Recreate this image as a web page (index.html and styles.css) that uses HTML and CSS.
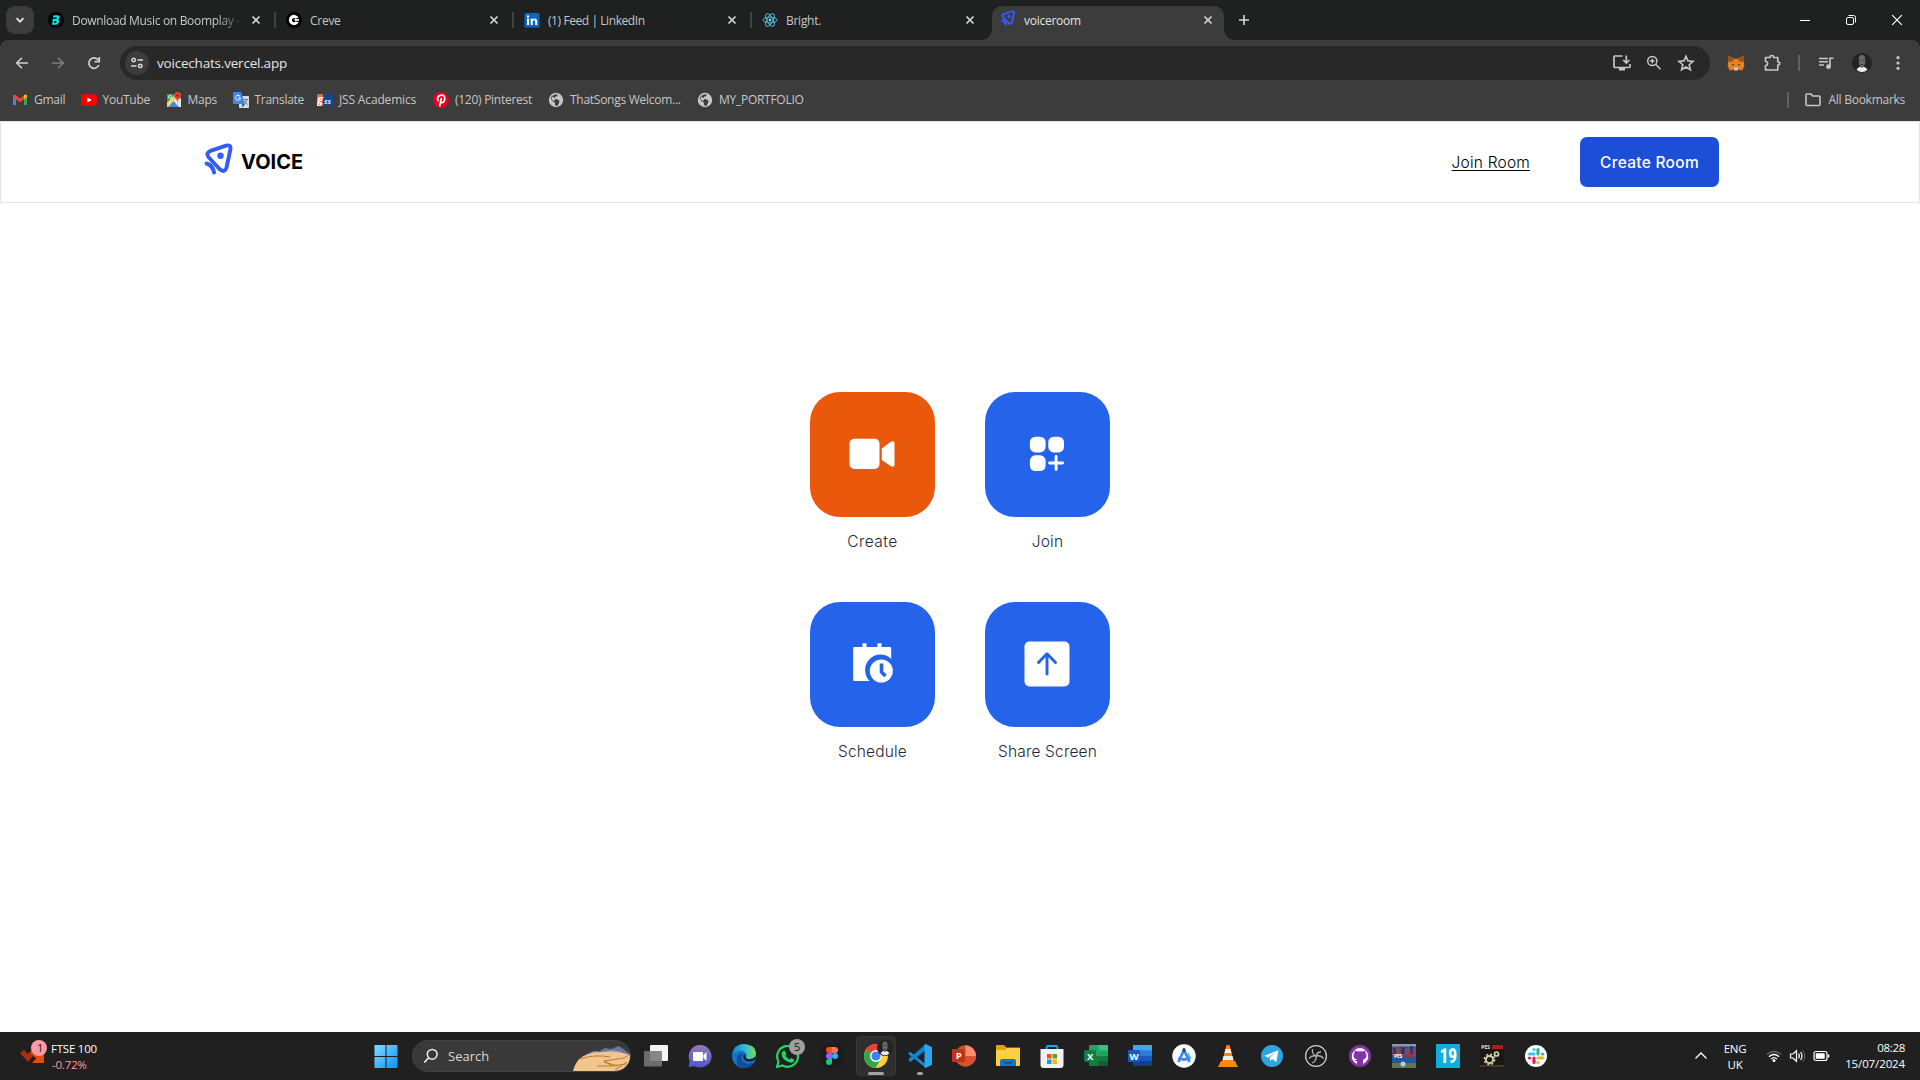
FILE: index.html
```html
<!DOCTYPE html>
<html lang="en">
<head>
<meta charset="utf-8">
<title>voiceroom</title>
<link rel="stylesheet" href="styles.css">
</head>
<body>
<svg class="defs" width="0" height="0">
  <defs>
    <symbol id="close" viewBox="0 0 16 16"><path d="M4.500 4.500l7 7M11.500 4.500l-7 7" stroke="currentColor" stroke-width="1.700" fill="none"/></symbol>
    <symbol id="globe" viewBox="0 0 16 16"><circle cx="8" cy="8" r="7.200" fill="#c4c7c9"/><path d="M3 5.200C4.600 3.200 7.500 2 9.600 2.200L9 4.600H7v2.200l2.600.6c2 .5 2 2 1.600 3.200L9.700 13.600C8.800 14.300 7.500 14 7.300 13.200L6.800 10.600 3.800 8.800z" fill="#3c3c3c"/><path d="M4 4.400l3.600 2-1.400 2.600L4 8z" fill="#c4c7c9"/></symbol>
    <symbol id="voice" viewBox="0 0 28 32"><g fill="none" stroke="#335cff" stroke-linecap="round" stroke-linejoin="round"><path d="M5.300 8.200 21.500 2.700Q26.500 1.500 26 6L22 24.500Q20 30.500 15 26L4.300 14.500Q1 10 5.300 8.200z" stroke-width="3.900"/><path d="M2 20.500Q8 22 9.600 29.500" stroke-width="4"/></g><circle cx="16" cy="12.700" r="3.200" fill="#335cff"/></symbol>
    <symbol id="face" viewBox="0 0 20 20"><circle cx="10" cy="10" r="10" fill="#242321"/><path d="M4.500 16.500q2-2.500 4-2.700l1.500 1 1.500-1q2 .2 4 2.700-2 2.500-5.500 2.500t-5.500-2.500z" fill="#eee"/><path d="M6.800 5q.5-3 3.200-3t3.200 3v5q-.7 3.500-3.200 4.500-2.500-1-3.200-4.500z" fill="#6a6a6a"/><path d="M7.500 7h1.800M10.700 7h1.800M8.700 11.500h2.600" stroke="#333" stroke-width="1.100"/></symbol>
  </defs>
</svg>

<header class="browser">
  <div class="tabstrip">
    <button class="tab-search"><svg width="12" height="12" viewBox="0 0 12 12"><path d="M2.500 4.200 6 7.700l3.500-3.500" fill="none" stroke="#e3e3e3" stroke-width="1.900"/></svg></button>
    <div class="tab">
      <svg width="16" height="16" viewBox="0 0 16 16"><circle cx="8" cy="8" r="8" fill="#000"/><path d="M5.300 3.200h4.200q2.500 0 2 2.400-.3 1.500-1.300 2 1.200.7.800 2.500-.5 2.700-3 2.700H3.800L4.900 8.500h1.600L6 10.700h1.500q.8 0 1-.8t-.8-.9H4.300l.5-2.200H8q.8 0 .9-.7t-.7-.7H5z" fill="#00e5ee"/></svg>
      <span class="tab-title fade">Download Music on Boomplay -</span><svg class="x"><use href="#close"/></svg>
    </div>
    <div class="tab">
      <svg width="16" height="16" viewBox="0 0 16 16"><circle cx="8" cy="8" r="8" fill="#000"/><path d="M12.600 5.500A5.200 5.200 0 1 0 12.700 10.300L9.700 9.200A2 2 0 1 1 9.500 6.700z" fill="#fff"/><path d="M8.500 7h4.500v1.700H8.500z" fill="#fff"/></svg>
      <span class="tab-title">Creve</span><svg class="x"><use href="#close"/></svg>
    </div>
    <div class="tab">
      <svg width="16" height="16" viewBox="0 0 16 16"><rect x=".5" y="1" width="15" height="14.500" rx="1" fill="#0a66c2"/><path d="M3 6.500h2v6.500H3zM6.700 6.500h1.900v1c1.200-1.800 4.600-1.500 4.600 1.700V13h-2V9.700c0-2-2.500-1.900-2.500.1V13h-2z" fill="#fff"/><circle cx="4" cy="4.400" r="1.200" fill="#fff"/></svg>
      <span class="tab-title feed">(1) Feed | LinkedIn</span><svg class="x"><use href="#close"/></svg>
    </div>
    <div class="tab plain">
      <svg width="16" height="16" viewBox="0 0 16 16"><g fill="none" stroke="#56b3c9" stroke-width="1"><ellipse cx="8" cy="8" rx="7" ry="2.900"/><ellipse cx="8" cy="8" rx="7" ry="2.900" transform="rotate(60 8 8)"/><ellipse cx="8" cy="8" rx="7" ry="2.900" transform="rotate(120 8 8)"/></g><circle cx="8" cy="8" r="1.400" fill="#61dafb"/></svg>
      <span class="tab-title">Bright.</span><svg class="x"><use href="#close"/></svg>
    </div>
    <div class="tab active">
      <svg class="voice-fav" width="14" height="16"><use href="#voice"/></svg>
      <span class="tab-title">voiceroom</span><svg class="x"><use href="#close"/></svg>
    </div>
    <button class="new-tab"><svg width="12" height="12" viewBox="0 0 12 12"><path d="M6 1v10M1 6h10" stroke="#d6d8d8" stroke-width="1.600"/></svg></button>
    <div class="window-controls">
      <svg viewBox="0 0 46 40"><path d="M18 20.500h10" stroke="#fff"/></svg>
      <svg viewBox="0 0 46 40"><rect x="18.500" y="17.500" width="7" height="7" rx="1.500" fill="none" stroke="#fff"/><path d="M20.500 15.500h5q2 0 2 2v5" fill="none" stroke="#fff"/></svg>
      <svg viewBox="0 0 46 40"><path d="M18.200 15.200l9.600 9.600M27.800 15.200l-9.600 9.600" stroke="#fff" stroke-width="1.200"/></svg>
    </div>
  </div>

  <div class="toolbar">
    <div class="nav-icon"><svg width="16" height="16" viewBox="0 0 16 16"><path d="M14 8H3M8 2.700 2.700 8 8 13.300" fill="none" stroke="#d0d1d1" stroke-width="1.600"/></svg></div>
    <div class="nav-icon"><svg width="16" height="16" viewBox="0 0 16 16"><path d="M2 8h11M8 2.700 13.300 8 8 13.300" fill="none" stroke="#7d7e7e" stroke-width="1.600"/></svg></div>
    <div class="nav-icon"><svg width="16" height="16" viewBox="0 0 16 16"><path d="M12.900 10A5.200 5.200 0 1 1 12.200 4.900M13.300 2v4.700H8.600" fill="none" stroke="#d0d1d1" stroke-width="1.700"/></svg></div>
    <div class="omnibox">
      <span class="site-info"><svg width="16" height="16" viewBox="0 0 16 16"><g fill="none" stroke="#d8d9d9" stroke-width="1.500"><circle cx="4.700" cy="5" r="1.700"/><circle cx="11.300" cy="11" r="1.700"/><path d="M8.500 5H14M2 11h5.500"/></g></svg></span>
      <span class="url">voicechats.vercel.app</span>
      <span class="omni-icon"><svg width="18" height="18" viewBox="0 0 18 18"><path d="M9.500 2H2q-1 0-1 1v9.500q0 1 1 1h14q1 0 1-1V10M13.300 1.500v7M10.300 6l3 3 3-3" fill="none" stroke="#c7c7c7" stroke-width="1.700"/><path d="M6 13h6v3.500H6z" fill="#c7c7c7"/></svg></span>
      <span class="omni-icon"><svg width="16" height="16" viewBox="0 0 16 16"><g fill="none" stroke="#c7c7c7" stroke-width="1.500"><circle cx="6.300" cy="6" r="4.600"/><path d="M9.600 9.300l4.800 4.900M4 6h4.600M6.300 3.700v4.600"/></g></svg></span>
      <span class="omni-icon"><svg width="18" height="18" viewBox="0 0 18 18"><path d="M9 2.200l2 4.700 5.100.4-3.900 3.400 1.200 5L9 13l-4.400 2.700 1.200-5L1.900 7.300 7 6.900z" fill="none" stroke="#c7c7c7" stroke-width="1.600"/></svg></span>
    </div>
    <div class="nav-icon"><svg width="18" height="18" viewBox="0 0 18 18"><path d="M1 1.500l6 3.300h4L17 1.500l-.3 6 .7 4.500-2.200 4.500-4-.9h-4.400l-4 .9L.6 12l.7-4.500z" fill="#e8821e"/><path d="M1 1.500l6 4-3 2.500-2.700-.5zM17 1.500l-6 4 3 2.500 2.700-.5z" fill="#96501c"/><path d="M4.300 10l3 .5-.8 1.300zM13.700 10l-3 .5.8 1.300z" fill="#233447"/><path d="M6.500 13.500h5l-.6 3H7z" fill="#d7c1b3"/></svg></div>
    <div class="nav-icon"><svg width="18" height="18" viewBox="0 0 18 18"><path d="M2.500 3.500h4.600q-.3-2 1.700-2t1.700 2h4.300v4.300q2 .2 2 1.700t-2 1.700v4.800H2.500v-4.300q2.200-.6 2.200-2.200T2.500 7.300z" fill="none" stroke="#c7c7c7" stroke-width="1.700" stroke-linejoin="round"/></svg></div>
    <i class="tool-sep"></i>
    <div class="nav-icon"><svg width="16" height="16" viewBox="0 0 16 16"><path d="M1 3.500h9M1 6.700h9M1 10h5M12 12V3.300h3.500" fill="none" stroke="#c7c7c7" stroke-width="1.600"/><circle cx="10.500" cy="11.700" r="2.400" fill="#c7c7c7"/></svg></div>
    <div class="nav-icon"><svg width="20" height="20"><use href="#face"/></svg></div>
    <div class="nav-icon"><svg width="16" height="16" viewBox="0 0 16 16" fill="#c7c7c7"><circle cx="8" cy="2.700" r="1.600"/><circle cx="8" cy="8" r="1.600"/><circle cx="8" cy="13.300" r="1.600"/></svg></div>
  </div>

  <div class="bookmarks">
    <div class="marks">
      <a><svg width="16" height="16" viewBox="0 0 16 16"><path d="M1 4v9h3V7z" fill="#4285f4"/><path d="M15 4v9h-3V7z" fill="#34a853"/><path d="M1 5V3.500Q2 1.800 4 3.300L8 6.500l4-3.200Q14 1.800 15 3.500V5l-7 5.500z" fill="#ea4335"/><path d="M12 3.300Q14 1.800 15 3.500V5l-3 2.500z" fill="#fbbc04"/></svg>Gmail</a>
      <a><svg width="16" height="16" viewBox="0 0 16 16"><rect y="2.300" width="16" height="11.500" rx="3" fill="#f00"/><path d="M6.300 5.500v5L10.800 8z" fill="#fff"/></svg>YouTube</a>
      <a><svg width="16" height="16" viewBox="0 0 16 16"><path d="M1 2h10l4 5v8H1z" fill="#eee"/><path d="M1 2h9L1 11z" fill="#34a853"/><path d="M2 15l5.500-6L13 15z" fill="#4285f4"/><path d="M1 12l8-8 1.500 1.500L2 15H1z" fill="#fbd34c"/><path d="M9 9l5 5.500V8z" fill="#d9dbdd"/><path d="M11.500 0a3.500 3.500 0 0 0-3.500 3.500c0 2.600 3 3.500 3.500 6.500.5-3 3.500-3.900 3.500-6.500A3.500 3.500 0 0 0 11.500 0z" fill="#ea4335"/><circle cx="11.500" cy="3.500" r="1.200" fill="#8c1d18"/><circle cx="4" cy="5" r="1.500" fill="none" stroke="#fff" stroke-width=".8"/></svg>Maps</a>
      <a><svg width="16" height="16" viewBox="0 0 16 16"><rect x="6" y="4" width="10" height="12" rx="1" fill="#d7d9dc"/><path d="M1 0h7l4 12H1Q0 12 0 11V1Q0 0 1 0z" fill="#4285f4"/><path d="M9 12h3l-2.500 3.500z" fill="#1a55bd"/><path d="M7 4.300A2.500 2.500 0 1 0 7.500 6H5.200" fill="none" stroke="#fff" stroke-width="1"/><path d="M10.500 7.500h4.500M13.700 7.500q-.5 3-2.500 4.500M11.500 9l3 3.500" fill="none" stroke="#68727c" stroke-width=".9"/></svg>Translate</a>
      <a class="jss"><svg width="16" height="16" viewBox="0 0 16 16"><rect y="2" width="6" height="12" fill="#df6c2e"/><rect x="6" y="2" width="10" height="12" fill="#15458c"/><text x="0" y="10.500" font-size="11" font-weight="700" font-style="italic" fill="#fff" font-family="Open Sans, sans-serif">g</text><text x="7" y="12" font-size="7.500" font-weight="700" font-style="italic" fill="#dce7ff" font-family="Open Sans, sans-serif">ss</text></svg>JSS Academics</a>
      <a><svg width="16" height="16" viewBox="0 0 16 16"><circle cx="8" cy="8" r="8" fill="#e60023"/><path d="M6.500 14.500 8.500 6M5.600 9.300Q3.200 5.800 6 4q4-2 5.700 1.200Q12 10.300 8.900 10.600q-1 0-1.500-.8" fill="none" stroke="#fff" stroke-width="1.700"/></svg>(120) Pinterest</a>
      <a><svg width="16" height="16"><use href="#globe"/></svg>ThatSongs Welcom...</a>
      <a><svg width="16" height="16"><use href="#globe"/></svg>MY_PORTFOLIO</a>
    </div>
    <div class="all-marks"><svg width="16" height="14" viewBox="0 0 16 14"><path d="M1 2q0-1 1-1h4l1.700 2H14q1 0 1 1v7.500q0 1-1 1H2q-1 0-1-1z" fill="none" stroke="#c7c7c7" stroke-width="1.600"/></svg>All Bookmarks</div>
  </div>
</header>

<main class="page">
  <nav class="site-nav">
    <a class="brand"><svg width="29" height="32"><use href="#voice"/></svg><span>VOICE</span></a>
    <div class="nav-actions"><a class="join-link">Join Room</a><button class="create-btn">Create Room</button></div>
  </nav>
  <section class="actions">
    <div class="action"><div class="tile orange"><svg width="50" height="50" viewBox="0 0 50 50" fill="#fff"><rect x="2.500" y="9.700" width="30" height="30.300" rx="5"/><path d="M34.800 19.500 43.500 13Q47.500 11 47.500 14.500V35.500Q47.500 39 43.500 37L34.800 31z"/></svg></div><span class="create">Create</span></div>
    <div class="action"><div class="tile"><svg width="50" height="50" viewBox="0 0 50 50" fill="#fff"><rect x="7.900" y="7.700" width="15.700" height="15.700" rx="5.500"/><rect x="26.300" y="7.700" width="15.700" height="15.700" rx="5.500"/><rect x="7.900" y="26.300" width="15.700" height="15.700" rx="5.500"/><path d="M34.100 27.500v13M27.600 34h13" stroke="#fff" stroke-width="2.900" stroke-linecap="round"/></svg></div><span>Join</span></div>
    <div class="action"><div class="tile"><svg width="50" height="50" viewBox="0 0 50 50"><path d="M7.500 8h8V4.200h4V8h11V4.200h4V8H43q1.200 0 1.200 1.200V20A15 15 0 0 0 22.700 42H7.500Q6.200 42 6.200 40.800V9.200Q6.200 8 7.500 8z" fill="#fff"/><circle cx="34.300" cy="32" r="14.800" fill="#2563eb"/><circle cx="34.300" cy="32" r="11.500" fill="#fff"/><path d="M34.500 24.500V33l4 4" fill="none" stroke="#2563eb" stroke-width="3.600"/></svg></div><span>Schedule</span></div>
    <div class="action"><div class="tile"><svg width="50" height="50" viewBox="0 0 50 50"><rect x="2.500" y="2.500" width="45" height="45" rx="5" fill="#fff"/><path d="M25 35V15M16.500 23.500l8.500-8.700 8.500 8.700" fill="none" stroke="#2563eb" stroke-width="2.900" stroke-linecap="round" stroke-linejoin="round"/></svg></div><span>Share Screen</span></div>
  </section>
</main>

<footer class="taskbar">
  <div class="widget">
    <svg width="28" height="26" viewBox="0 0 28 26"><path d="M2 11.500l6 6.500 6-7" fill="none" stroke="#a9300d" stroke-width="5"/><path d="M12 11l7 7" stroke="#d84a0a" stroke-width="5"/><path d="M24 10v13H12z" fill="#e05000"/><circle cx="19" cy="8" r="8" fill="#ff99a4"/><text x="20" y="12" font-size="11" text-anchor="middle" fill="#1b1b1b" font-family="Open Sans, sans-serif">1</text></svg>
    <div><p>FTSE 100</p><p class="down">-0.72%</p></div>
  </div>
  <div class="apps">
    <span class="app"><svg viewBox="0 0 24 24"><defs><linearGradient id="win" x2="1" y2="1"><stop stop-color="#7fdcff"/><stop offset="1" stop-color="#0a93fb"/></linearGradient></defs><path d="M.5 1h11v11H.5zM12.500 1h11v11h-11zM.5 13h11v11H.5zM12.500 13h11v11h-11z" fill="url(#win)"/></svg></span>
    <div class="search">
      <svg width="16" height="16" viewBox="0 0 16 16"><circle cx="9.200" cy="6.300" r="4.900" fill="none" stroke="#eee" stroke-width="1.500"/><path d="M5.500 10 1.300 14.500" stroke="#eee" stroke-width="1.800"/></svg>
      <span>Search</span>
      <svg class="scene" width="57" height="26" viewBox="0 0 57 26"><path d="M12 10l8-4 5 1 7-4 6 1 8-3 11 8v5H12z" fill="#6d7495"/><path d="M17 8l6-2 7 2 8-3 8 1 9 4v3H17z" fill="#9695b4"/><path d="M0 26Q4 10 20 8q20-4 37 2v10q-1 4-6 6z" fill="#f1c58d"/><path d="M7 14q15-5 30-2M24 21h15l-8-5 20-3 5-3M39 21l14-2M42 25l12-8M31 17l14 4" stroke="#b97935" fill="none"/></svg>
    </div>
    <span class="app"><svg viewBox="0 0 24 24"><rect x="6" y="1" width="18" height="16" rx="1" fill="#f4f4f4"/><rect y="7" width="18" height="15.500" rx="1" fill="#777" fill-opacity=".88"/></svg></span>
    <span class="app"><svg viewBox="0 0 24 24"><defs><linearGradient id="chat" x2="0" y2="1"><stop stop-color="#9579b6"/><stop offset="1" stop-color="#5057c8"/></linearGradient></defs><path d="M12 1a11.300 11.300 0 1 1-5 21.300L.5 23l1.200-6A11.300 11.300 0 0 1 12 1z" fill="url(#chat)"/><rect x="5" y="8" width="10" height="9" rx="1" fill="#fff"/><path d="M15.500 11l3-3v9l-3-3z" fill="#fff"/></svg></span>
    <span class="app"><svg viewBox="0 0 24 24"><defs><linearGradient id="edge" x2="1"><stop stop-color="#1680d4"/><stop offset=".55" stop-color="#32bfd2"/><stop offset="1" stop-color="#73df4c"/></linearGradient></defs><circle cx="12" cy="12" r="12" fill="#1475cb"/><path d="M0 11Q1.500 0 12 0q12 1 12 9 0 5-6 6-5 0-4-2 1.500-3-1-5Q7 4 0 11z" fill="url(#edge)"/><path d="M11.500 9Q7 13 11 17.500q4 4 11 .5-4 6-10 6Q4 23 4.500 15 5 9 11.500 9z" fill="#0c4f9c"/><path d="M12 10.500q-1.500 1.500-.5 4 2.500 4.500 9 2.500l3-1.500v-3q-2 2.500-5.500 2.500-5 0-4-2 .5-2-2-2.500z" fill="#202020"/></svg></span>
    <span class="app badge-host"><svg viewBox="0 0 24 24"><path d="M2.500 17.500A10.400 10.400 0 1 1 6.500 21.500L1 23z" fill="none" stroke="#25d366" stroke-width="2.200"/><path d="M8.500 6.500 10.500 10 9.500 11.500q1.500 3 4 4l1.700-1.600 3 1.800q0 3-3.500 3-9-2-9.200-9.500 1-2.700 3-2.700z" fill="#25d366"/></svg><b class="badge">5</b></span>
    <span class="app"><svg viewBox="0 0 24 24"><rect width="24" height="24" rx="2" fill="#1c1c1e"/><path d="M12 3H9a3 3 0 0 0 0 6h3z" fill="#f24e1e"/><path d="M12 3h3a3 3 0 0 1 0 6h-3z" fill="#ff7262"/><path d="M12 9H9a3 3 0 0 0 0 6h3z" fill="#a259ff"/><circle cx="15" cy="12" r="3" fill="#1abcfe"/><path d="M12 15H9a3 3 0 1 0 3 3z" fill="#0acf83"/></svg></span>
    <span class="app current"><svg viewBox="0 0 24 24"><circle cx="12" cy="12" r="12" fill="#ffcd40"/><path d="M12 12 1.600 6a12 12 0 0 1 20.800 0z" fill="#e84236"/><path d="M1.600 6A12 12 0 0 0 11.500 24l5.700-9.500L12 12z" fill="#31a64f"/><circle cx="12" cy="12" r="6" fill="#fff"/><circle cx="12" cy="12" r="4.600" fill="#3d80ef"/></svg><svg class="profile" width="16" height="16"><use href="#face"/></svg></span>
    <span class="app running"><svg viewBox="0 0 24 24"><path d="M2.500 8 18 20.500V24L1 10.500Q0 9.500 1 8.500z" fill="#168bd8"/><path d="M1 14.500 18 0v6L3 17.500q-1 .5-1.500-.3L.5 16z" fill="#1583ca"/><path d="M17.500 0 24 3v18l-6.500 3q-1 0-1-1V1q0-1 1-1z" fill="#2ba6f2"/></svg></span>
    <span class="app"><svg viewBox="0 0 24 24"><circle cx="13.500" cy="12" r="10.700" fill="#d35230"/><path d="M13.500 1.300A10.700 10.700 0 0 1 24 12H13.500z" fill="#ff8f6b"/><rect y="5" width="13" height="13" rx="1" fill="#bf3414"/><text x="6.500" y="15.200" text-anchor="middle" class="office">P</text></svg></span>
    <span class="app"><svg viewBox="0 0 24 24"><path d="M0 2q0-1 1-1h7l2.500 2.500H24V14H0z" fill="#dba40c"/><path d="M0 6h9l2-2h13v17q0 1-1 1H1q-1 0-1-1z" fill="#fdd044"/><path d="M4 22v-5q0-2 2-2h12q2 0 2 2v5z" fill="#1174c4"/><path d="M8 18h8v1.500H8z" fill="#0a4f91"/></svg></span>
    <span class="app"><svg viewBox="0 0 24 24"><path d="M6.500 8V3.500Q6.500 2 8 2h8q1.500 0 1.500 1.500V8" fill="none" stroke="#1aa8ec" stroke-width="1.800"/><path d="M.5 5h23v16q0 3-3 3h-17q-3 0-3-3z" fill="#f0f0f0"/><path d="M7 10h4.500v4.500H7z" fill="#f25022"/><path d="M12.500 10H17v4.500h-4.500z" fill="#5eaa0a"/><path d="M7 15.500h4.500V20H7z" fill="#00a4ef"/><path d="M12.500 15.500H17V20h-4.500z" fill="#ffb900"/></svg></span>
    <span class="app"><svg viewBox="0 0 24 24"><rect x="5" y="1" width="19" height="21" rx="1" fill="#21a366"/><path d="M14.500 1H23q1 0 1 1v4.500h-9.500z" fill="#33c481"/><path d="M5 12h19v9q0 1-1 1H6q-1 0-1-1z" fill="#107c41"/><path d="M14.500 17H24v5h-9.500z" fill="#185c37"/><rect y="6" width="12" height="12" rx="1" fill="#107c41"/><text x="6" y="15.700" text-anchor="middle" class="office">X</text></svg></span>
    <span class="app"><svg viewBox="0 0 24 24"><rect x="5" y="1" width="19" height="21" rx="1" fill="#2b7cd3"/><path d="M5 1h18q1 0 1 1v4.500H5z" fill="#41a5ee"/><path d="M5 12h19v5H5z" fill="#185abd"/><path d="M5 17h19v5H5z" fill="#103f91"/><rect y="6" width="12" height="12" rx="1" fill="#185abd"/><text x="6" y="15.700" text-anchor="middle" class="office">W</text></svg></span>
    <span class="app"><svg viewBox="0 0 24 24"><circle cx="12" cy="12" r="11.700" fill="#fff"/><path d="M16 8l3 5-1 4-3-4z" fill="#3ddc84"/><path d="M12 6 6.500 18M12 6l5.500 12M6.500 13.500q5.500 4 11 0" fill="none" stroke="#4285f4" stroke-width="2.700"/><path d="M10.500 8V5L12 3.500 13.500 5v3z" fill="#2f4560"/></svg></span>
    <span class="app"><svg viewBox="0 0 24 24"><path d="M5 17h14l3 6H2z" fill="#f48b00"/><path d="M10.500 1h3L18 18q-6 3-12 0z" fill="#f7861b"/><path d="M9.500 5h5l1 4h-7zM7.500 12h9l1 4h-11z" fill="#eee"/></svg></span>
    <span class="app"><svg viewBox="0 0 24 24"><circle cx="12" cy="12" r="11" fill="#2da5de"/><path d="M4.500 11.700 18.500 6.300 16.300 18l-4.100-3-2 2-.6-3.500L16 8.500l-8 5z" fill="#fff"/></svg></span>
    <span class="app"><svg viewBox="0 0 24 24"><circle cx="12" cy="12" r="10.400" fill="#1d1b1c" stroke="#ccc" stroke-width="1.300"/><path d="M8.500 5q-1 5 3.500 7 5-1 7.500 2.500M12 12q1 5-4 7M12 12Q8 11 5 14.500M12 12q1-4 5-4" fill="none" stroke="#b4b4b4" stroke-width="1.300"/></svg></span>
    <span class="app"><svg viewBox="0 0 24 24"><circle cx="12" cy="12" r="11" fill="#8534a5"/><path d="M12 4a8.300 8.300 0 0 0-3 16v-3q-2 .3-3-1.500 2 1 3.200.2-3.700-1-3.700-4.200 0-1.500 1-2.500-.3-1.500.3-2.500 1.300 0 2.400 1 2.800-.7 5.600 0 1.100-1 2.400-1 .6 1 .3 2.500 1 1 1 2.500 0 3.200-3.500 4.200V20A8.300 8.300 0 0 0 12 4z" fill="#fff"/></svg></span>
    <span class="app"><svg viewBox="0 0 24 24"><rect width="24" height="24" fill="#35517b"/><path d="M0 5q4-5 7 0 5-5 9 0 4-5 8 0v7H0z" fill="#85465b"/><path d="M0 0h24v2.500H0z" fill="#8f97ad"/><path d="M1 4h3v6H1zM9 3h4v7H9zM18 2h3v8h-3z" fill="#253b79"/><path d="M0 14h24v4H0z" fill="#1c58a6"/><path d="M0 19h24v5H0z" fill="#617655"/><circle cx="11" cy="20" r="2.500" fill="#bcd"/><text x="2" y="13.500" font-size="5" font-weight="700" fill="#fff" font-family="Open Sans, sans-serif">PES</text><path d="M13 10h9v3h-9z" fill="#b12a3c"/></svg></span>
    <span class="app"><svg viewBox="0 0 24 24"><rect width="24" height="24" fill="#0eafdc"/><text x="12.300" y="19.200" text-anchor="middle" font-size="20" font-weight="900" fill="#fff" font-family="Roboto, sans-serif" textLength="17" lengthAdjust="spacingAndGlyphs">19</text></svg></span>
    <span class="app"><svg viewBox="0 0 24 24"><rect width="24" height="24" fill="#1b1814"/><text x="1" y="5.200" font-size="5.500" font-weight="700" fill="#ddd" font-family="Open Sans, sans-serif">PES</text><path d="M12 1h11v4H12z" fill="#b61a20"/><circle cx="9.500" cy="15.500" r="3.600" fill="none" stroke="#d8cfa8" stroke-width="2"/><circle cx="9.500" cy="15.500" r="5.200" fill="none" stroke="#d8cfa8" stroke-width="1.500" stroke-dasharray="2 2.080"/><circle cx="16.500" cy="10" r="2" fill="none" stroke="#d8cfa8" stroke-width="1.700"/><path d="M0 22h24" stroke="#676041"/></svg></span>
    <span class="app"><svg viewBox="0 0 24 24"><circle cx="12" cy="12" r="11" fill="#fff"/><g fill="none" stroke-width="3.200" stroke-linecap="round"><path d="M5.500 10H10M10 5.500h.01" stroke="#36c5f0"/><path d="M14 5.500V10M18.500 10h.01" stroke="#2eb67d"/><path d="M14 14h4.500M14 18.500h.01" stroke="#ecb22e"/><path d="M10 14v4.500M5.500 14h.01" stroke="#e01e5a"/></g></svg></span>
  </div>
  <div class="tray">
    <svg class="chev" width="14" height="10" viewBox="0 0 14 10"><path d="M1.500 7.500 7 2l5.500 5.500" fill="none" stroke="#fff" stroke-width="1.300"/></svg>
    <div class="lang"><p>ENG</p><p>UK</p></div>
    <div class="status">
      <svg width="16" height="16" viewBox="0 0 16 16"><g fill="none" stroke="#fff" stroke-width="1.300"><path d="M.8 6.500q7.200-6 14.400 0" stroke="#666"/><path d="M2.900 8.800q5.100-4.600 10.200 0M5 11q3-2.700 6 0"/></g><circle cx="8" cy="12.500" r="1.500" fill="#fff"/></svg>
      <svg width="17" height="16" viewBox="0 0 17 16"><path d="M1.500 6H4l3.500-3.300v10.600L4 10H1.500z" fill="none" stroke="#fff" stroke-width="1.200"/><path d="M9.500 5.700q1.700 2.300 0 4.600M11.500 4q3 4 0 8" fill="none" stroke="#fff" stroke-width="1.200"/><path d="M13.700 2.500q4 5.500 0 11" fill="none" stroke="#666"/></svg>
      <svg width="17" height="16" viewBox="0 0 17 16"><rect x="1" y="3.500" width="13" height="9" rx="2" fill="none" stroke="#fff" stroke-width="1.200"/><rect x="2.700" y="5.200" width="9" height="5.600" rx=".6" fill="#fff"/><path d="M15.500 6.500v3" stroke="#fff" stroke-width="1.500"/></svg>
    </div>
    <div class="clock"><p class="time">08:28</p><p>15/07/2024</p></div>
  </div>
</footer>
</body>
</html>
```
FILE: styles.css
```css
* { box-sizing: border-box; }
body {
  margin: 0;
  width: 1920px;
  height: 1080px;
  overflow: hidden;
  display: flex;
  flex-direction: column;
  background: #fff;
  font-family: "Open Sans", "Noto Sans", sans-serif;
  font-size: 12px;
}
.defs { display: none; }
svg { display: block; flex: none; }
button { border: 0; padding: 0; font: inherit; }
p { margin: 0; }

/* Browser window */
.browser { height: 121px; background: #1f2120; color: #c7c7c7; letter-spacing: -0.27px; }
.tabstrip { height: 40px; display: flex; align-items: flex-start; padding-left: 6px; }
.tab-search {
  width: 28px; height: 28px; margin: 6px 4px 0 0;
  border-radius: 9px; background: #3c3c3c;
  display: grid; place-items: center;
}
.tab {
  width: 238px; height: 40px; padding: 0 12px 0 10px;
  display: flex; align-items: center; gap: 8px;
  background: linear-gradient(#424444, #424444) right 0 top 12px / 2px 16px no-repeat;
}
.tab.plain { background: none; }
.tab-title { flex: 1; line-height: 16px; padding-top: 1px; white-space: nowrap; }
.tab-title.feed { letter-spacing: -0.42px; }
.fade {
  letter-spacing: -0.32px;
  -webkit-mask: linear-gradient(90deg, #000 145px, transparent 172px);
  mask: linear-gradient(90deg, #000 145px, transparent 172px);
}
.x { width: 16px; height: 16px; color: #d4d6d6; }
.tab.active {
  width: 232px; height: 34px; margin: 6px 0 0 2px; padding: 0 8px 6px;
  border-radius: 10px 10px 0 0; background: #3c3c3c; color: #e3e3e3;
  position: relative;
}
.active::before, .active::after {
  content: ""; position: absolute; bottom: 0; width: 10px; height: 10px;
}
.active::before { left: -10px; background: radial-gradient(circle at 0 0, transparent 9.5px, #3c3c3c 10px); }
.active::after { right: -10px; background: radial-gradient(circle at 100% 0, transparent 9.5px, #3c3c3c 10px); }
.voice-fav { margin: -4px 1px 0; }
.new-tab { width: 28px; height: 28px; margin: 6px 0 0 6px; background: none; display: grid; place-items: center; }
.window-controls { display: flex; margin-left: auto; }
.window-controls svg { width: 46px; height: 40px; }

.toolbar {
  height: 40px; padding: 6px 4px 0; display: flex; align-items: center;
  background: #3c3c3c; border-radius: 8px 8px 0 0;
}
.nav-icon { width: 36px; height: 34px; display: grid; place-items: center; }
.omnibox {
  flex: 1; height: 34px; margin: 0 8px; padding: 0 8px 0 5px;
  border-radius: 17px; background: #282828;
  display: flex; align-items: center;
}
.site-info { width: 24px; height: 24px; border-radius: 50%; background: #3c3c3c; display: grid; place-items: center; }
.url { flex: 1; margin-left: 8px; font-size: 13.5px; letter-spacing: -0.2px; color: #e6e6e6; }
.omni-icon { width: 32px; display: grid; place-items: center; }
.tool-sep { width: 2px; height: 16px; margin: 0 8px; background: #5f6060; }

.bookmarks {
  height: 41px; padding: 0 15px 2px 12px; background: #3c3c3c;
  display: flex; align-items: center; justify-content: space-between;
}
.marks { display: grid; grid-template-columns: 68.500px 85px 67px 84.500px 116px 115px 149px 120px; }
.marks a { display: flex; align-items: center; gap: 6px; white-space: nowrap; }
.marks .jss { letter-spacing: -0.16px; }
.all-marks {
  display: flex; align-items: center; gap: 8px; padding: 0 0 0 16px;
  border-left: 2px solid #5f6060; height: 16px; white-space: nowrap;
}

/* Site */
.page { height: 911px; font-family: Inter, "Open Sans", sans-serif; font-size: 15.500px; color: #1e293b; }
.site-nav {
  height: 82px; padding: 0 200px 0 203px; border: 1px solid #e2e4e7;
  display: flex; align-items: center; justify-content: space-between;
}
.brand { display: flex; align-items: center; gap: 8px; color: #000; font-weight: 700; font-size: 20px; }
.brand svg { margin-top: -7px; }
.nav-actions { display: flex; align-items: center; gap: 50px; }
.join-link { color: #000; font-weight: 300; letter-spacing: 0.2px; text-decoration: underline; text-underline-offset: 2px; text-decoration-thickness: 1px; }
.create-btn {
  width: 139px; height: 50px; border-radius: 7px;
  background: #1d4ed8; color: #fff; font-weight: 500; letter-spacing: 0.28px;
}
.actions {
  display: grid; grid-template-columns: 125px 125px; gap: 49px 50px;
  justify-content: center; padding-top: 189px;
}
.action { display: flex; flex-direction: column; align-items: center; gap: 13.500px; line-height: 22.500px; white-space: nowrap; font-weight: 300; letter-spacing: 0.18px; }
.action .create { letter-spacing: 0.45px; }
.tile { width: 125px; height: 125px; padding: 37px; border-radius: 30px; background: #2563eb; }
.orange { background: #ea580c; }

/* Taskbar */
.taskbar {
  height: 48px; background: #202020; color: #fff; font-size: 11.500px; line-height: 16px;
  display: flex; align-items: center; letter-spacing: -0.22px;
}
.widget { width: 364px; padding: 1px 0 0 20px; display: flex; gap: 3px; }
.widget svg { margin-top: -1px; }
.widget .down { color: #ff99a4; margin-left: 1px; }
.apps { display: flex; align-items: center; }
.app {
  width: 44px; height: 48px; display: grid; place-items: center; position: relative;
}
.app > svg:first-child { width: 24px; height: 24px; }
.search {
  width: 219px; height: 32px; margin: 0 3px 0 4px; padding-left: 10px;
  border-radius: 16px; background: #393939; border: 1px solid #424242;
  display: flex; align-items: center; overflow: hidden; font-size: 13px; color: #d8d8d8; letter-spacing: 0;
}
.search span { flex: 1; margin-left: 9px; }
.scene { align-self: flex-end; }
.badge {
  position: absolute; right: 5px; top: 7px; width: 16px; height: 16px;
  border-radius: 50%; background: #9f9f9b; color: #111; text-align: center;
  font-weight: 400; font-size: 11px;
}
.current::before {
  content: ""; position: absolute; inset: 4px 2px; border-radius: 4px;
  background: #2e2e2e; border: 1px solid #373737;
}
.current svg { position: relative; }
.current .profile { position: absolute; left: 23px; top: 8px; }
.current::after, .running::after {
  content: ""; position: absolute; top: 40px; width: 16px; height: 3px;
  border-radius: 2px; background: #a3a3a3;
}
.running::after { width: 6px; }
.office { font: 700 9.500px "Open Sans", sans-serif; fill: #fff; }
.tray { margin-left: auto; padding-right: 15px; display: flex; align-items: center; }
.chev { margin-right: 15px; }
.lang { text-align: center; width: 24px; padding-top: 1px; }
.status { display: flex; align-items: center; gap: 7px; margin: 0 0 0 19px; }
.clock { width: 75px; text-align: right; letter-spacing: -0.12px; }
.clock .time { letter-spacing: -0.3px; }
```
